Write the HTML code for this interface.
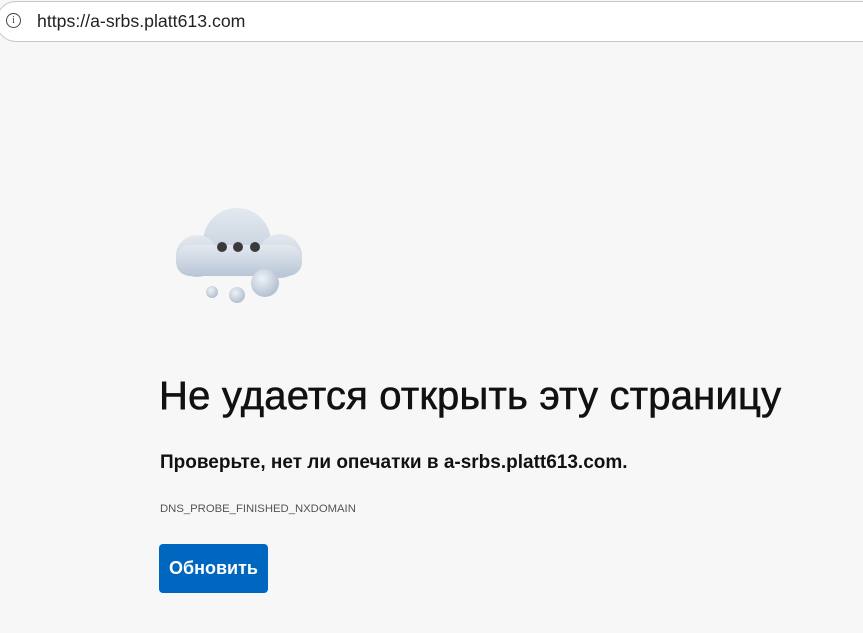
<!DOCTYPE html>
<html><head><meta charset="utf-8"><style>
html,body{margin:0;padding:0;width:863px;height:633px;overflow:hidden;background:#f7f7f7;font-family:"Liberation Sans",sans-serif;}
.bar{position:absolute;left:0;top:0;width:863px;height:44px;background:#f7f7f7;}
.addr{position:absolute;left:-4px;top:1px;width:900px;height:41px;background:#fff;border:1px solid #c8c8c8;border-radius:20px;box-sizing:border-box;}
.info{position:absolute;left:6px;top:13px;width:15px;height:15px;border:1.3px solid #444;border-radius:50%;box-sizing:border-box;font-size:10px;line-height:13px;text-align:center;color:#444;font-family:"Liberation Serif",serif;}
.url{position:absolute;left:37px;top:11px;font-size:17.7px;color:#222;}
h1{position:absolute;left:159px;top:374px;margin:0;font-size:40px;letter-spacing:0.2px;font-weight:normal;color:#111;white-space:nowrap;-webkit-text-stroke:0.6px #111;}
.sub{position:absolute;left:160px;top:452px;font-size:19px;font-weight:bold;color:#111;white-space:nowrap;}
.code{position:absolute;left:160px;top:503px;font-size:11.3px;color:#555;}
.btn{position:absolute;left:159px;top:544px;width:109px;height:49px;background:#0067c0;border-radius:4px;color:#fff;font-weight:bold;font-size:18px;line-height:49px;text-align:center;}
</style></head><body>
<div class="bar"><div class="addr"></div><div class="info">i</div><div class="url">https://a-srbs.platt613.com</div></div>
<svg width="863" height="633" style="position:absolute;left:0;top:0">
<defs>
<linearGradient id="g" x1="0" y1="0" x2="0" y2="1"><stop offset="0" stop-color="#e4e9f0"/><stop offset="1" stop-color="#b9c6d6"/></linearGradient>
<radialGradient id="s" cx="0.4" cy="0.35" r="0.7"><stop offset="0" stop-color="#eef2f7"/><stop offset="1" stop-color="#aebcce"/></radialGradient>
</defs>
<g fill="url(#g)">
<circle cx="237" cy="242" r="34"/>
<circle cx="197" cy="256" r="21"/>
<circle cx="280" cy="256" r="22"/>
<rect x="176" y="245" width="126" height="31" rx="14"/>
</g>
<circle cx="222" cy="247" r="5" fill="#3a3a3a"/>
<circle cx="238" cy="247" r="5" fill="#3a3a3a"/>
<circle cx="255" cy="247" r="5" fill="#3a3a3a"/>
<circle cx="212" cy="292" r="6" fill="url(#s)"/>
<circle cx="237" cy="295" r="8" fill="url(#s)"/>
<circle cx="265" cy="283" r="14" fill="url(#s)"/>
</svg>
<h1>Не удается открыть эту страницу</h1>
<div class="sub">Проверьте, нет ли опечатки в a-srbs.platt613.com.</div>
<div class="code">DNS_PROBE_FINISHED_NXDOMAIN</div>
<div class="btn">Обновить</div>
</body></html>
